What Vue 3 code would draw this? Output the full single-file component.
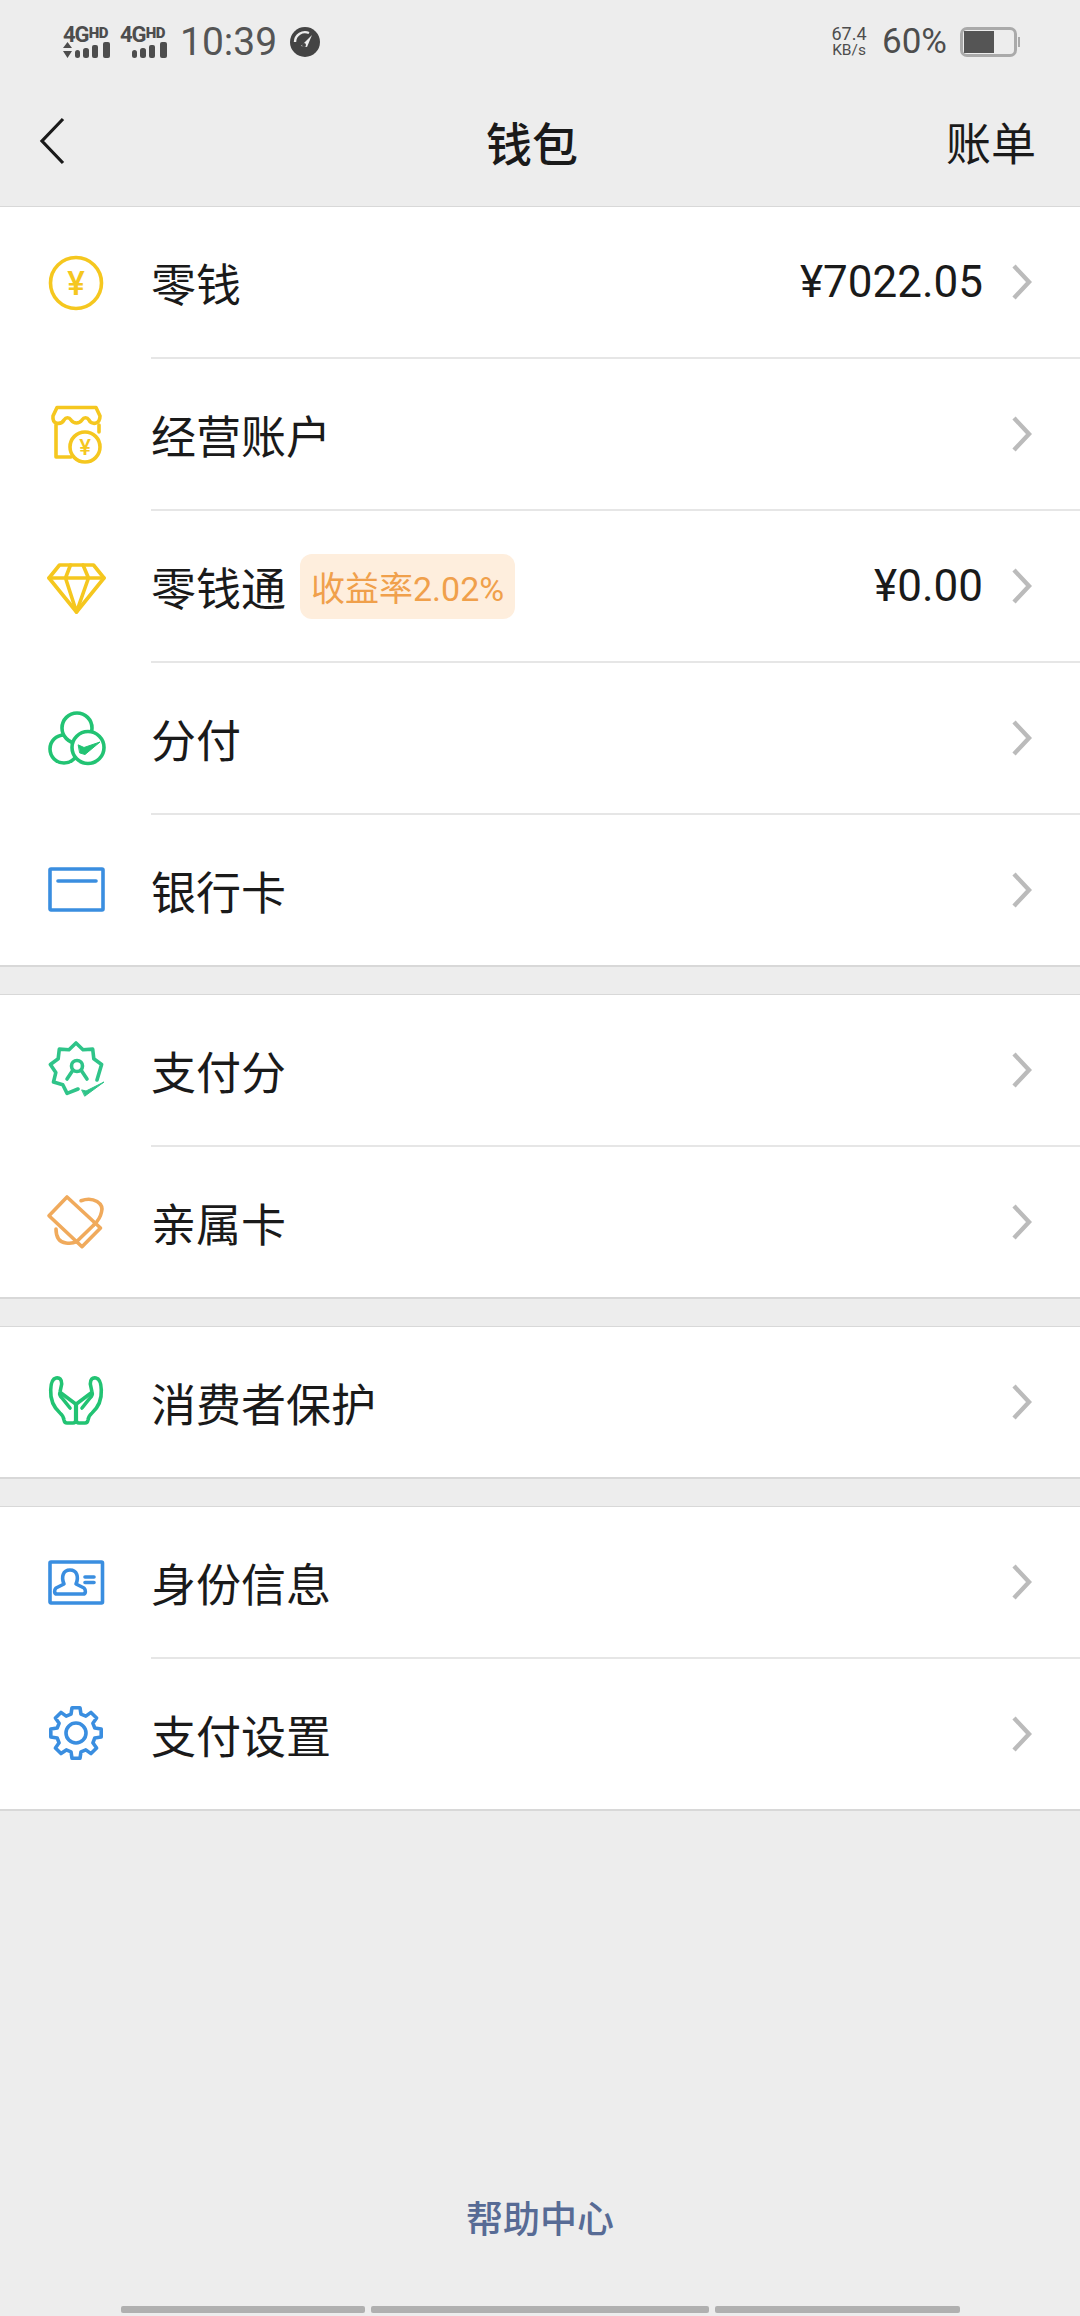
<template>
  <div class="page">
    <header class="top">
      <div class="status">
        <div class="sim">
          <div class="sim-name">4G<span>HD</span></div>
          <svg class="sim-bars" width="48" height="18" viewBox="0 0 48 18">
            <path d="M0 7 L4.5 1 L9 7 Z M0 10 L9 10 L4.5 17 Z" fill="#4d4d4d" />
            <rect x="12" y="9" width="5" height="8" rx="2.5" fill="#4d4d4d" />
            <rect x="20" y="7" width="6" height="10" rx="2.5" fill="#4d4d4d" />
            <rect x="29" y="4" width="6" height="13" rx="2" fill="#4d4d4d" />
            <rect x="40" y="1" width="7" height="16" rx="2" fill="#4d4d4d" />
          </svg>
        </div>
        <div class="sim">
          <div class="sim-name">4G<span>HD</span></div>
          <svg class="sim-bars" width="48" height="18" viewBox="0 0 48 18">
            <rect x="12" y="9" width="5" height="8" rx="2.5" fill="#4d4d4d" />
            <rect x="20" y="7" width="6" height="10" rx="2.5" fill="#4d4d4d" />
            <rect x="29" y="4" width="6" height="13" rx="2" fill="#4d4d4d" />
            <rect x="40" y="1" width="7" height="16" rx="2" fill="#4d4d4d" />
          </svg>
        </div>
        <span class="time">10:39</span>
        <svg class="gauge" width="30" height="30" viewBox="0 0 30 30">
          <circle cx="15" cy="15" r="15" fill="#444" />
          <path d="M5 15 A10 10 0 0 1 19 6" fill="none" stroke="#ededed" stroke-width="2.4" />
          <path d="M11 19 L22 8 L17 20 Z" fill="#ededed" />
          <circle cx="14" cy="18" r="2" fill="#444" />
        </svg>
        <div class="status-right">
          <div class="speed">
            <span class="speed-num">67.4</span>
            <span class="speed-unit">KB/s</span>
          </div>
          <span class="percent">60%</span>
          <div class="battery">
            <div class="battery-fill"></div>
          </div>
          <div class="battery-tip"></div>
        </div>
      </div>
      <div class="nav">
        <div class="nav-left">
          <svg width="26" height="48" viewBox="0 0 26 48">
            <path d="M24 2 L3 24 L24 46" fill="none" stroke="#1a1a1a" stroke-width="3.2" />
          </svg>
        </div>
        <div class="nav-title">钱包</div>
        <div class="nav-right">账单</div>
      </div>
    </header>

    <section v-for="(group, i) in groups" :key="i" class="group">
      <div v-for="row in group" :key="row.name" class="row">
        <svg class="row-icon" width="60" height="60" viewBox="0 0 60 60" fill="none" stroke-width="3.6" stroke-linejoin="round" stroke-linecap="round">
          <g v-if="row.icon === 'coin'" stroke="#f5c71f">
            <circle cx="30" cy="30" r="25.5" />
            <text x="30" y="42" class="yen" font-size="33" fill="#f5c71f" stroke="none" text-anchor="middle">¥</text>
          </g>
          <g v-else-if="row.icon === 'shop'" stroke="#f5c71f">
            <path d="M10 20 V52 H25 M53 20 V27" />
            <path d="M11 2.5 H50 L54 11 C54 20 45 20 43 15 C41 12 38 12 36 15 C33 19 28 19 25 15 C23 12 20 12 18 15 C15 20 6 20 7 11 Z" />
            <circle cx="39" cy="42" r="15" />
            <text x="39" y="50" class="yen" font-size="22" fill="#f5c71f" stroke="none" text-anchor="middle">¥</text>
          </g>
          <g v-else-if="row.icon === 'diamond'" stroke="#f5c71f">
            <path d="M13.5 8 H47.5 L58 21 L30.5 55 L3 21 Z" />
            <path d="M3 21 H58 M24.5 8 L19.5 21 L30.5 55 L42.5 21 L37 8" />
          </g>
          <g v-else-if="row.icon === 'share'" stroke="#22c373">
            <circle cx="18" cy="40" r="14" />
            <circle cx="31" cy="19" r="15" fill="#fff" />
            <circle cx="42" cy="38.5" r="16" fill="#fff" />
            <path d="M32.5 36 L38 38.5 L54 33 L39 45.5 L34 44 Z" fill="#22c373" stroke-width="1" />
          </g>
          <g v-else-if="row.icon === 'card'" stroke="#3a8ee0">
            <rect x="4" y="9" width="53" height="41" rx="1" />
            <path d="M12 21 H50" />
          </g>
          <g v-else-if="row.icon === 'score'" stroke="#2fc489">
            <path d="M51 39 L55.6 23.5 L47.8 17.75 L46.7 8.1 L37 8.7 L30 2 L23 8.7 L13.3 8.1 L12.2 17.75 L4.4 23.5 L9.8 31.6 L7.5 41 L16.8 43.7 L21.1 52.4 L32 48" />
            <circle cx="31" cy="25" r="5.5" />
            <path d="M21 38 L27 29 M41 38 L35 29" />
            <path d="M36 49 L40 50 L58 41 L39 55 Z" fill="#2fc489" stroke-width="1" />
          </g>
          <g v-else-if="row.icon === 'family'" stroke="#f0aa5c">
            <path d="M21 5 L54.5 36 L36 54.7 L3 23.7 Z" />
            <path d="M48 32.7 L30.5 49.7" />
            <path d="M35 8.7 C48 4 58 12 55.5 20 C54.5 25 52 29 48 32.7" />
            <path d="M10 37 C10 44 12 50 20 51 C24 51.5 28 51 30.5 49.7" />
          </g>
          <g v-else-if="row.icon === 'hands'" stroke="#22c373">
            <path d="M29.7 32 V48 Q29.7 51 27 51 H21 Q18.5 51 18 48 Q17.5 44 14 41 Q4 32 4.7 18 Q5 7 10 6 Q15.7 5 15.7 12 L14 20 Q13 23 16 26 L24 36" />
            <path d="M15 21 L29.7 32" />
            <path d="M30.3 32 V48 Q30.3 51 33 51 H39 Q41.5 51 42 48 Q42.5 44 46 41 Q56 32 55.3 18 Q55 7 50 6 Q44.3 5 44.3 12 L46 20 Q47 23 44 26 L36 36" />
            <path d="M45 21 L30.3 32" />
          </g>
          <g v-else-if="row.icon === 'id'" stroke="#3a8ee0">
            <rect x="4" y="9" width="52.5" height="41" rx="1" />
            <path d="M18 31 C15 24 17 17 24 17 C31 17 33 24 30 31 L38 35 C40 37 40 41 37 41 H11 C8 41 8 37 10 35 Z" />
            <path d="M39 24 H48 M39 29.5 H48" />
          </g>
          <g v-else stroke="#3a8ee0">
            <path :d="gearPath" />
            <circle cx="30" cy="29" r="10" />
          </g>
        </svg>
        <div class="row-body" :class="{ 'no-line': row === group[group.length - 1] }">
          <span class="row-name">{{ row.name }}</span>
          <span v-if="row.badge" class="badge">{{ row.badge }}</span>
          <span v-if="row.value" class="row-value">{{ row.value }}</span>
          <svg class="arrow" width="22" height="38" viewBox="0 0 22 38">
            <path d="M3 3 L18 19 L3 35" fill="none" stroke="#bbb" stroke-width="4.4" />
          </svg>
        </div>
      </div>
    </section>

    <footer class="bottom">
      <div class="help">帮助中心</div>
      <div class="nav-bars">
        <div></div>
        <div></div>
        <div></div>
      </div>
    </footer>
  </div>
</template>

<script setup>
const groups = [
  [
    { name: '零钱', icon: 'coin', value: '¥7022.05' },
    { name: '经营账户', icon: 'shop' },
    { name: '零钱通', icon: 'diamond', badge: '收益率2.02%', value: '¥0.00' },
    { name: '分付', icon: 'share' },
    { name: '银行卡', icon: 'card' }
  ],
  [
    { name: '支付分', icon: 'score' },
    { name: '亲属卡', icon: 'family' }
  ],
  [{ name: '消费者保护', icon: 'hands' }],
  [
    { name: '身份信息', icon: 'id' },
    { name: '支付设置', icon: 'gear' }
  ]
]

// eight teeth around (30, 29)
function buildGear() {
  const pt = (r, deg) => {
    const a = (deg * Math.PI) / 180
    return (30 + r * Math.sin(a)).toFixed(1) + ' ' + (29 - r * Math.cos(a)).toFixed(1)
  }
  let d = ''
  for (let t = 0; t < 8; t++) {
    const a = t * 45
    d += (t === 0 ? 'M' : 'L') + pt(19.5, a - 15)
    d += ' L' + pt(25.5, a - 9)
    d += ' L' + pt(25.5, a + 9)
    d += ' L' + pt(19.5, a + 15) + ' '
  }
  return d + 'Z'
}
const gearPath = buildGear()
</script>

<style scoped>
.page {
  width: 1080px;
  min-height: 2316px;
  display: flex;
  flex-direction: column;
  background: #ededed;
  color: #1a1a1a;
  font-family: "Roboto", "Noto Sans CJK SC", sans-serif;
}

.top {
  height: 206px;
}

.status {
  height: 84px;
  display: flex;
  align-items: center;
  padding: 0 60px 0 63px;
  color: #4d4d4d;
}

.sim {
  width: 48px;
  margin-right: 9px;
  display: flex;
  flex-direction: column;
}

.sim-name {
  height: 16px;
  font-size: 22px;
  line-height: 16px;
  font-weight: 700;
  letter-spacing: -1px;
  white-space: nowrap;
}

.sim-name span {
  font-size: 15px;
  vertical-align: 4px;
  font-weight: 900;
  letter-spacing: -0.5px;
}

.sim-bars {
  display: block;
}

.time {
  margin-left: 3px;
  font-size: 39px;
  line-height: 38px;
  color: #555;
}

.gauge {
  margin-left: 13px;
}

.status-right {
  margin-left: auto;
  display: flex;
  align-items: center;
}

.speed {
  display: flex;
  flex-direction: column;
  align-items: center;
  width: 36px;
  margin-right: 15px;
}

.speed-num {
  font-size: 18px;
  line-height: 16px;
}

.speed-unit {
  font-size: 15.5px;
  line-height: 16px;
}

.percent {
  font-size: 35px;
  line-height: 34px;
  margin-right: 13px;
}

.battery {
  width: 57px;
  height: 30px;
  box-sizing: border-box;
  border: 3px solid #aaa;
  border-radius: 7px;
  padding: 1px;
}

.battery-fill {
  width: 30px;
  height: 22px;
  background: #555;
}

.battery-tip {
  width: 2px;
  height: 10px;
  margin-left: 1px;
  background: #aaa;
}

.nav {
  height: 114px;
  display: flex;
  align-items: center;
}

.nav-left {
  width: 118px;
  padding-left: 39px;
  box-sizing: border-box;
  display: flex;
  align-items: center;
}

.nav-title {
  flex: 1;
  text-align: center;
  font-size: 46px;
  font-weight: 500;
}

.nav-right {
  width: 134px;
  font-size: 45px;
}

.group {
  background: #fff;
  border-top: 1px solid #d8d8d8;
  margin-bottom: 27px;
}

.row {
  height: 152px;
  display: flex;
  align-items: center;
  padding-left: 46px;
}

.row:last-child {
  height: 150px;
  border-bottom: 2px solid #d8d8d8;
}

.row-icon {
  flex: none;
  margin-right: 45px;
}

.row-body {
  flex: 1;
  height: 100%;
  display: flex;
  align-items: center;
  padding-right: 47px;
  border-bottom: 2px solid #e6e6e6;
  box-sizing: border-box;
}

.row-body.no-line {
  border-bottom: none;
}

.row-name {
  font-size: 45px;
}

.badge {
  height: 65px;
  margin-left: 14px;
  padding: 0 11px;
  display: flex;
  align-items: center;
  background: #feeedd;
  border-radius: 12px;
  color: #f0a04b;
  font-size: 34px;
}

.row-value {
  margin-left: auto;
  font-size: 44px;
}

.arrow {
  margin-left: 28px;
}

.row-body > .row-name + .arrow,
.row-body > .badge + .arrow {
  margin-left: auto;
}

.yen {
  font-family: "Roboto", sans-serif;
  font-weight: 500;
}

.bottom {
  margin-top: auto;
}

.help {
  text-align: center;
  font-size: 37px;
  line-height: 50px;
  font-weight: 500;
  color: #576b95;
  margin-bottom: 60px;
}

.nav-bars {
  display: grid;
  grid-template-columns: 244px 338px 245px;
  gap: 6px;
  padding: 0 0 3px 121px;
}

.nav-bars div {
  height: 7px;
  background: #b0b0b0;
  border-radius: 2px;
}
</style>

<style>
body {
  background: #ededed;
}
</style>
